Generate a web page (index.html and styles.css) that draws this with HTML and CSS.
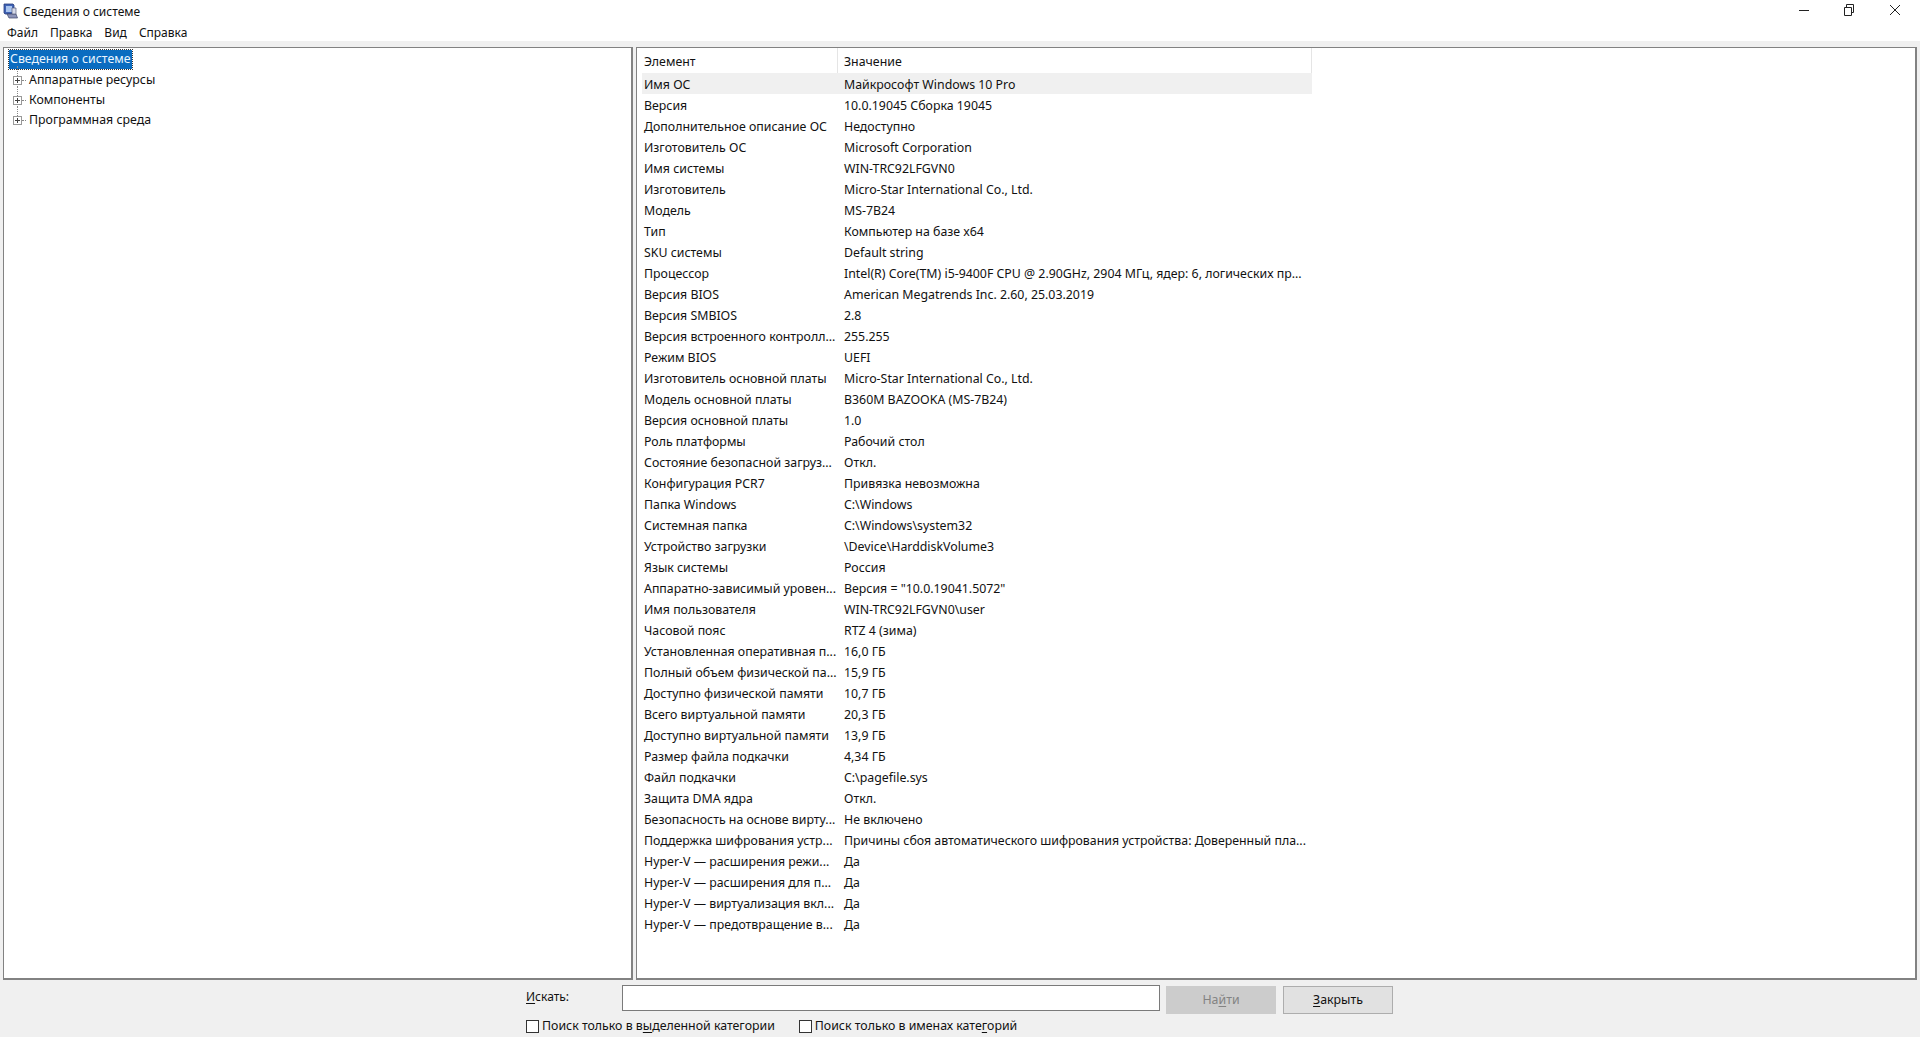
FILE: index.html
```html
<!DOCTYPE html>
<html lang="ru">
<head>
<meta charset="utf-8">
<title>Сведения о системе</title>
<link rel="stylesheet" href="styles.css">
</head>
<body>
<header class="titlebar">
  <svg class="appicon" width="16" height="18" viewBox="0 0 16 18"><path d="M2 1h9l1 1v9H3l-1-1z" fill="#3f63b5" stroke="#2c3f7d" stroke-width=".8"/><rect x="4" y="3" width="6" height="6" fill="#a9c4ee"/><path d="M5 11h9l1.500 4H7z" fill="#8c93b8" stroke="#3e4668" stroke-width=".7"/><path d="M10 5h4v6h-4z" fill="#d5d9e8" stroke="#5a607f" stroke-width=".7"/></svg>
  <span class="title">Сведения о системе</span>
  <div class="winbtns">
    <svg width="46" height="20" viewBox="0 0 46 20"><path d="M19 10.500h10" stroke="#222" fill="none"/></svg>
    <svg width="46" height="20" viewBox="0 0 46 20"><path d="M18.500 7.500h7v8h-7zM20.500 7.500v-3h7v8h-2" stroke="#222" fill="none"/></svg>
    <svg width="46" height="20" viewBox="0 0 46 20"><path d="M18 5l10 10M28 5L18 15" stroke="#222" fill="none"/></svg>
  </div>
</header>
<nav class="menubar"><span>Файл</span><span>Правка</span><span>Вид</span><span>Справка</span></nav>
<main class="panes">
  <section class="tree">
    <div class="root"><span class="sel">Сведения о системе</span></div>
    <div class="node"><i class="exp"></i><span>Аппаратные ресурсы</span></div>
    <div class="node"><i class="exp"></i><span>Компоненты</span></div>
    <div class="node"><i class="exp"></i><span>Программная среда</span></div>
  </section>
  <section class="list">
    <div class="head"><div class="c1">Элемент</div><div class="c2">Значение</div></div>
    <div class="row first"><div class="c1">Имя ОС</div><div class="c2">Майкрософт Windows 10 Pro</div></div>
    <div class="row"><div class="c1">Версия</div><div class="c2">10.0.19045 Сборка 19045</div></div>
    <div class="row"><div class="c1">Дополнительное описание ОС</div><div class="c2">Недоступно</div></div>
    <div class="row"><div class="c1">Изготовитель ОС</div><div class="c2">Microsoft Corporation</div></div>
    <div class="row"><div class="c1">Имя системы</div><div class="c2">WIN-TRC92LFGVN0</div></div>
    <div class="row"><div class="c1">Изготовитель</div><div class="c2">Micro-Star International Co., Ltd.</div></div>
    <div class="row"><div class="c1">Модель</div><div class="c2">MS-7B24</div></div>
    <div class="row"><div class="c1">Тип</div><div class="c2">Компьютер на базе x64</div></div>
    <div class="row"><div class="c1">SKU системы</div><div class="c2">Default string</div></div>
    <div class="row"><div class="c1">Процессор</div><div class="c2">Intel(R) Core(TM) i5-9400F CPU @ 2.90GHz, 2904 МГц, ядер: 6, логических пр...</div></div>
    <div class="row"><div class="c1">Версия BIOS</div><div class="c2">American Megatrends Inc. 2.60, 25.03.2019</div></div>
    <div class="row"><div class="c1">Версия SMBIOS</div><div class="c2">2.8</div></div>
    <div class="row"><div class="c1">Версия встроенного контролл...</div><div class="c2">255.255</div></div>
    <div class="row"><div class="c1">Режим BIOS</div><div class="c2">UEFI</div></div>
    <div class="row"><div class="c1">Изготовитель основной платы</div><div class="c2">Micro-Star International Co., Ltd.</div></div>
    <div class="row"><div class="c1">Модель основной платы</div><div class="c2">B360M BAZOOKA (MS-7B24)</div></div>
    <div class="row"><div class="c1">Версия основной платы</div><div class="c2">1.0</div></div>
    <div class="row"><div class="c1">Роль платформы</div><div class="c2">Рабочий стол</div></div>
    <div class="row"><div class="c1">Состояние безопасной загруз...</div><div class="c2">Откл.</div></div>
    <div class="row"><div class="c1">Конфигурация PCR7</div><div class="c2">Привязка невозможна</div></div>
    <div class="row"><div class="c1">Папка Windows</div><div class="c2">C:\Windows</div></div>
    <div class="row"><div class="c1">Системная папка</div><div class="c2">C:\Windows\system32</div></div>
    <div class="row"><div class="c1">Устройство загрузки</div><div class="c2">\Device\HarddiskVolume3</div></div>
    <div class="row"><div class="c1">Язык системы</div><div class="c2">Россия</div></div>
    <div class="row"><div class="c1">Аппаратно-зависимый уровен...</div><div class="c2">Версия = "10.0.19041.5072"</div></div>
    <div class="row"><div class="c1">Имя пользователя</div><div class="c2">WIN-TRC92LFGVN0\user</div></div>
    <div class="row"><div class="c1">Часовой пояс</div><div class="c2">RTZ 4 (зима)</div></div>
    <div class="row"><div class="c1">Установленная оперативная п...</div><div class="c2">16,0 ГБ</div></div>
    <div class="row"><div class="c1">Полный объем физической па...</div><div class="c2">15,9 ГБ</div></div>
    <div class="row"><div class="c1">Доступно физической памяти</div><div class="c2">10,7 ГБ</div></div>
    <div class="row"><div class="c1">Всего виртуальной памяти</div><div class="c2">20,3 ГБ</div></div>
    <div class="row"><div class="c1">Доступно виртуальной памяти</div><div class="c2">13,9 ГБ</div></div>
    <div class="row"><div class="c1">Размер файла подкачки</div><div class="c2">4,34 ГБ</div></div>
    <div class="row"><div class="c1">Файл подкачки</div><div class="c2">C:\pagefile.sys</div></div>
    <div class="row"><div class="c1">Защита DMA ядра</div><div class="c2">Откл.</div></div>
    <div class="row"><div class="c1">Безопасность на основе вирту...</div><div class="c2">Не включено</div></div>
    <div class="row"><div class="c1">Поддержка шифрования устр...</div><div class="c2">Причины сбоя автоматического шифрования устройства: Доверенный пла...</div></div>
    <div class="row"><div class="c1">Hyper-V — расширения режи...</div><div class="c2">Да</div></div>
    <div class="row"><div class="c1">Hyper-V — расширения для п...</div><div class="c2">Да</div></div>
    <div class="row"><div class="c1">Hyper-V — виртуализация вкл...</div><div class="c2">Да</div></div>
    <div class="row"><div class="c1">Hyper-V — предотвращение в...</div><div class="c2">Да</div></div>
  </section>
</main>
<footer class="search">
  <div class="search-left">
    <div class="search-top">
      <label class="lbl"><u>И</u>скать:</label>
      <div class="input"></div>
    </div>
    <div class="checks">
      <label class="chk"><i class="box"></i><span>Поиск только в в<u>ы</u>деленной категории</span></label>
      <label class="chk"><i class="box"></i><span>Поиск только в именах кате<u>г</u>орий</span></label>
    </div>
  </div>
  <div class="btn disabled"><span>На<u>й</u>ти</span></div>
  <div class="btn"><span><u>З</u>акрыть</span></div>
</footer>
</body>
</html>
```
FILE: styles.css
```css
* { box-sizing: border-box; }
html, body { margin: 0; height: 100%; }
body {
  width: 1920px; height: 1037px; overflow: hidden;
  background: #f0f0f0; color: #111;
  font: 12.35px/16px "Noto Sans", sans-serif;
  display: flex; flex-direction: column;
}
u { text-underline-offset: 2px; }
.titlebar { height: 22px; background: #fff; display: flex; align-items: center; padding: 1px 0 0 2px; flex: none; }
.appicon { flex: none; }
.title { margin-left: 5px; font-size: 12px; }
.winbtns { display: flex; align-self: flex-start; margin: -1px 2px 0 auto; }
.menubar { height: 19px; background: #fff; display: flex; gap: 12px; padding: 2px 0 0 7px; flex: none; align-items: center; font-size: 12px; }
.panes { flex: none; height: 933px; margin: 6px 3px 0; display: flex; gap: 3px; }
.tree, .list { background: #fff; border: solid #828282; border-width: 1px 2px 2px 1px; height: 100%; }
.tree { width: 630px; padding: 2px 0 0 5px; position: relative; }
.list { flex: 1; min-width: 0; }
.root { height: 20px; display: flex; align-items: flex-start; }
.sel { background: #0a6cc0; color: #eaf6ff; padding: 0 1px; height: 19px; line-height: 18px; outline: 1px dotted #333; }
.node { height: 20px; display: flex; align-items: center; padding-left: 4px; gap: 7px; position: relative; }
.node::before { content: ""; position: absolute; left: 8px; top: -4px; height: 14px; border-left: 1px dotted #888; }
.node::after { content: ""; position: absolute; left: 13px; top: 10px; width: 4px; border-top: 1px dotted #888; }
.exp { width: 9px; height: 9px; border: 1px solid #999; position: relative; z-index: 1; flex: none; background: #fff linear-gradient(#444,#444) center/5px 1px no-repeat; }
.exp::after { content: ""; position: absolute; left: 3px; top: 1px; height: 5px; border-left: 1px solid #444; }
.head { display: flex; height: 25px; width: 675px; }
.row { display: flex; height: 21px; align-items: center; padding-top: 3px; }
.row.first { background: #f0f0f0; width: 670px; margin-left: 5px; }
.c1 { width: 201px; padding-left: 7px; white-space: nowrap; flex: none; }
.c2 { width: 474px; padding-left: 6px; white-space: nowrap; flex: none; }
.row.first .c1 { width: 196px; padding-left: 2px; }
.head .c1, .head .c2 { border-right: 1px solid #e5e5e5; display: flex; align-items: center; padding-top: 2px; }
.search { flex: 1; display: flex; padding: 5px 0 0 526px; align-items: flex-start; }
.search-left { width: 634px; }
.search-top { display: flex; align-items: center; height: 26px; }
.lbl { width: 96px; padding-bottom: 2px; font-size: 12px; }
.input { width: 538px; height: 26px; background: #fff; border: 1px solid #7a7a7a; }
.checks { display: flex; margin-top: 7px; gap: 24px; }
.chk { display: flex; align-items: center; gap: 3px; }
.box { width: 13px; height: 13px; border: 1px solid #333; background: #fff; flex: none; }
.btn { width: 110px; height: 28px; margin: 1px 0 0 7px; border: 1px solid #adadad; background: #e1e1e1; display: flex; align-items: center; justify-content: center; }
.btn.disabled { background: #cccccc; border-color: #cccccc; color: #838383; margin-left: 6px; }
```
